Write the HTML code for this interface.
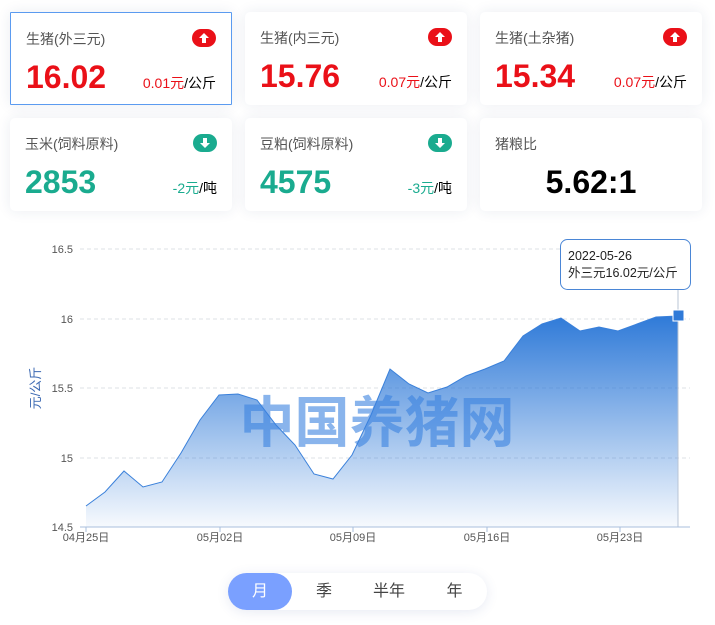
<!DOCTYPE html>
<html><head><meta charset="utf-8"><style>
*{margin:0;padding:0;box-sizing:border-box}
body{width:715px;height:625px;background:#fff;font-family:"Liberation Sans","Noto Sans CJK SC",sans-serif;position:relative;overflow:hidden}
.card{position:absolute;width:222px;height:93px;background:#fff;border-radius:5px;box-shadow:0 0 14px rgba(30,50,110,.09)}
.card.sel{border:1px solid #5b9bf0;border-radius:1px}
.t{position:absolute;left:15px;top:16px;font-size:14px;color:#555;line-height:20px}
.v{position:absolute;left:15px;top:44px;font-size:32px;font-weight:bold;line-height:40px}
.r{color:#ea1018}.g{color:#1aab8f}
.d{position:absolute;right:15px;top:60px;font-size:14px;line-height:20px;color:#000}
.ic{position:absolute;right:15px;top:16px;width:24px;height:18px;border-radius:9px}
.ic svg{position:absolute;left:6px;top:3px}
</style></head><body>
<div class="card sel" style="left:10px;top:12px"><div class="t">生猪(外三元)</div><div class="ic" style="background:#ea1018"><svg width="12" height="12" viewBox="0 0 12 12"><path d="M6 1L11 6H8V11H4V6H1Z" fill="#fff"/></svg></div><div class="v r">16.02</div><div class="d"><span class="r">0.01元</span>/公斤</div></div>
<div class="card" style="left:245px;top:12px"><div class="t">生猪(内三元)</div><div class="ic" style="background:#ea1018"><svg width="12" height="12" viewBox="0 0 12 12"><path d="M6 1L11 6H8V11H4V6H1Z" fill="#fff"/></svg></div><div class="v r">15.76</div><div class="d"><span class="r">0.07元</span>/公斤</div></div>
<div class="card" style="left:480px;top:12px"><div class="t">生猪(土杂猪)</div><div class="ic" style="background:#ea1018"><svg width="12" height="12" viewBox="0 0 12 12"><path d="M6 1L11 6H8V11H4V6H1Z" fill="#fff"/></svg></div><div class="v r">15.34</div><div class="d"><span class="r">0.07元</span>/公斤</div></div>
<div class="card" style="left:10px;top:118px"><div class="t">玉米(饲料原料)</div><div class="ic" style="background:#1aab8f"><svg width="12" height="12" viewBox="0 0 12 12"><path d="M6 11L11 6H8V1H4V6H1Z" fill="#fff"/></svg></div><div class="v g">2853</div><div class="d"><span class="g">-2元</span>/吨</div></div>
<div class="card" style="left:245px;top:118px"><div class="t">豆粕(饲料原料)</div><div class="ic" style="background:#1aab8f"><svg width="12" height="12" viewBox="0 0 12 12"><path d="M6 11L11 6H8V1H4V6H1Z" fill="#fff"/></svg></div><div class="v g">4575</div><div class="d"><span class="g">-3元</span>/吨</div></div>
<div class="card" style="left:480px;top:118px"><div class="t">猪粮比</div><div class="v" style="left:0;width:222px;text-align:center;color:#000">5.62:1</div></div>

<svg style="position:absolute;left:0;top:0" width="715" height="625">
<defs><linearGradient id="gr" x1="0" y1="0" x2="0" y2="1"><stop offset="0" stop-color="#2f7ad8"/><stop offset="1" stop-color="#2f7ad8" stop-opacity="0.04"/></linearGradient></defs>
<g stroke="#dde0e6" stroke-dasharray="4,3"><line x1="80" y1="249" x2="690" y2="249"/><line x1="80" y1="319" x2="690" y2="319"/><line x1="80" y1="388" x2="690" y2="388"/><line x1="80" y1="458" x2="690" y2="458"/></g>
<path d="M86 506L105 492L124 471L143 487L162 482L181 453L200 420L219 395L238 394L257 400L276 425L295 445L314 474L333 479L352 455L371 415L390 369L409 384L428 393L447 387L466 376L485 369L504 361L523 336L542 324L561 318L580 331L599 327L618 331L637 324L656 317L678 316L678 527L86 527Z" fill="url(#gr)"/>
<path d="M86 506L105 492L124 471L143 487L162 482L181 453L200 420L219 395L238 394L257 400L276 425L295 445L314 474L333 479L352 455L371 415L390 369L409 384L428 393L447 387L466 376L485 369L504 361L523 336L542 324L561 318L580 331L599 327L618 331L637 324L656 317L678 316" fill="none" stroke="#3a80da" stroke-width="1"/>
<line x1="678" y1="255" x2="678" y2="527" stroke="#b8c4d6"/>
<line x1="80" y1="527" x2="690" y2="527" stroke="#a9bfdc"/>
<g stroke="#a9bfdc"><line x1="86" y1="527" x2="86" y2="532"/><line x1="220" y1="527" x2="220" y2="532"/><line x1="353" y1="527" x2="353" y2="532"/><line x1="487" y1="527" x2="487" y2="532"/><line x1="620" y1="527" x2="620" y2="532"/></g>
<rect x="673" y="310" width="11" height="11" fill="#2f7ad8" stroke="#fff" stroke-width="1"/>
<g font-size="11" fill="#555" font-family="Liberation Sans,Noto Sans CJK SC,sans-serif" text-anchor="end"><text x="73" y="253">16.5</text><text x="73" y="323">16</text><text x="73" y="392">15.5</text><text x="73" y="462">15</text><text x="73" y="531">14.5</text></g>
<g font-size="11" fill="#555" font-family="Liberation Sans,Noto Sans CJK SC,sans-serif" text-anchor="middle"><text x="86" y="541">04月25日</text><text x="220" y="541">05月02日</text><text x="353" y="541">05月09日</text><text x="487" y="541">05月16日</text><text x="620" y="541">05月23日</text></g>
<text transform="translate(40,388) rotate(-90)" text-anchor="middle" font-size="13" fill="#3d6ab3" font-family="Liberation Sans,Noto Sans CJK SC,sans-serif">元/公斤</text>
<text x="377" y="442" text-anchor="middle" font-size="55" font-weight="bold" fill="#3a82e0" fill-opacity="0.6" font-family="Noto Sans CJK SC,sans-serif">中国养猪网</text>
<rect x="560.5" y="239.5" width="130" height="50" rx="7" fill="#fff" stroke="#4a86d6" />
<text x="568" y="260" font-size="12.5" fill="#222" font-family="Liberation Sans,Noto Sans CJK SC,sans-serif">2022-05-26</text>
<text x="568" y="277" font-size="12.5" fill="#222" font-family="Liberation Sans,Noto Sans CJK SC,sans-serif">外三元16.02元/公斤</text>
</svg>

<div style="position:absolute;left:228px;top:573px;width:259px;height:37px;border-radius:19px;background:#fff;box-shadow:0 2px 12px rgba(60,80,160,.12)"></div>
<div style="position:absolute;left:228px;top:573px;width:64px;height:37px;border-radius:19px;background:#7aa0ff"></div>
<div style="position:absolute;left:228px;top:573px;width:259px;height:37px;display:flex;font-size:16px;line-height:37px;text-align:center;color:#444">
<div style="width:64px;color:#fff">月</div><div style="width:64px">季</div><div style="width:66px">半年</div><div style="width:65px">年</div></div>
</body></html>
